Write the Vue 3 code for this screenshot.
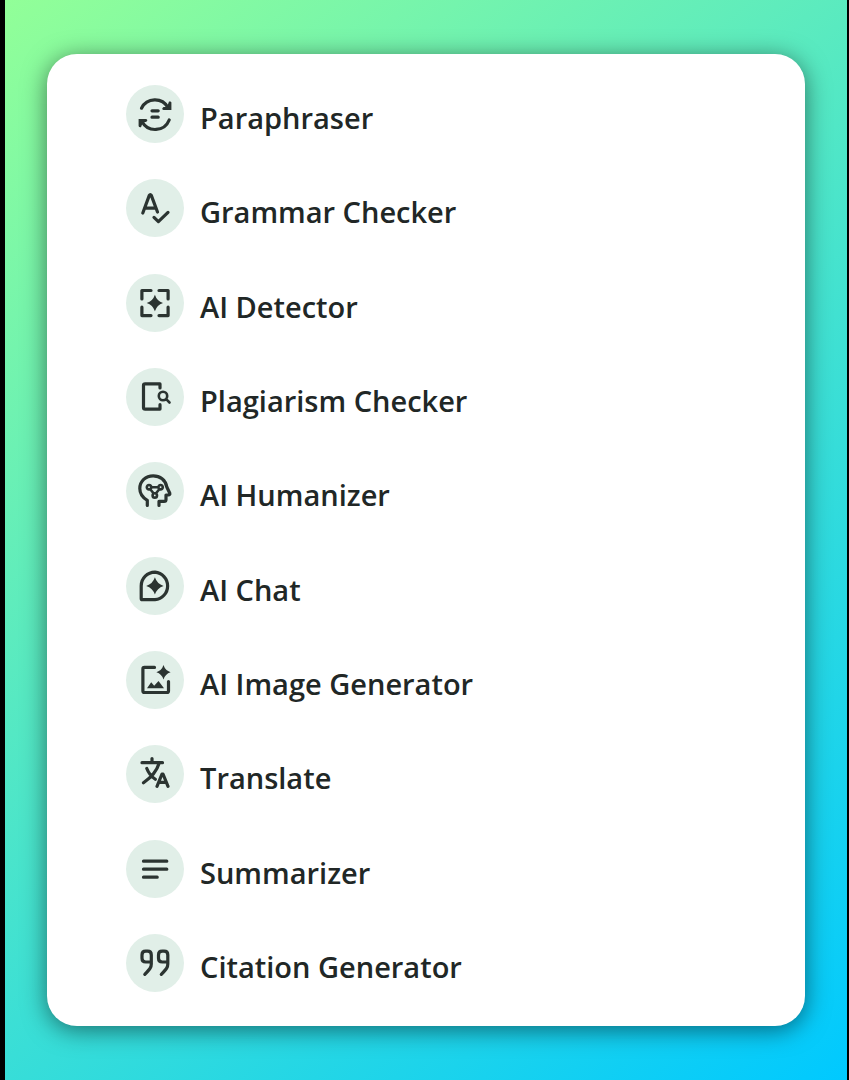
<template>
  <div class="page">
    <main class="card">
      <ul class="tool-list">
        <li v-for="tool in tools" :key="tool.name" class="tool">
          <span class="tool-icon">
            <svg viewBox="0 0 58 58" aria-hidden="true">
              <path v-if="tool.line" class="line" :d="tool.line" />
              <path v-if="tool.thin" class="thin" :d="tool.thin" />
              <path v-if="tool.fill" class="fill" :d="tool.fill" />
            </svg>
          </span>
          <span class="tool-name">{{ tool.name }}</span>
        </li>
      </ul>
    </main>
  </div>
</template>

<script setup>
// line / thin are stroked, fill is solid
const tools = [
  {
    name: 'Paraphraser',
    line: 'M15.5 23.2A15 15 0 0 1 42 22.5M43.2 35A15 15 0 0 1 16 36.5M26 25.8H32.2M26 32.2H32.2',
    fill: 'M43 16.5Q45.4 16 45.4 17.5V25H37.5Q36 25 36.3 23.2L37.5 22L41 22ZM15 42.3Q12.6 42.5 12.6 41V34H20Q21.5 34 21.3 35.7L20 37L17 37Z'
  },
  {
    name: 'Grammar Checker',
    line: 'M16.8 34L23.3 16.4Q24.3 14.8 25.3 16.4L31.5 33M19 29.2H29.5M28 38.4L32.4 42.6L42 33.4'
  },
  {
    name: 'AI Detector',
    line: 'M15.9 25V16.5H25M33 16.5H42.1V25M42.1 33.2V41.6H33M25 41.6H15.9V33.2',
    fill: 'M28.9 20.7Q30.9 27 37 29Q30.9 31 28.9 37.3Q26.9 31 20.7 29Q26.9 27 28.9 20.7Z'
  },
  {
    name: 'Plagiarism Checker',
    line: 'M34 20V15.9H19.2Q17.5 15.9 17.5 17.6V39.4Q17.5 41.1 19.2 41.1H34V36.7',
    thin: 'M41.2 28A4.2 4.2 0 1 1 32.8 28A4.2 4.2 0 1 1 41.2 28M40.2 31.2L43.5 34.5'
  },
  {
    name: 'AI Humanizer',
    line: 'M21.3 43.5V38.3C16.5 35.5 13.8 31.2 13.8 26.5C13.8 19.2 19.7 13.8 27.2 13.8C34 13.8 39.6 18 40.8 25L43.8 31.3Q44.2 32.8 42.3 33H40V37.4Q40 39.3 38 39.3H33V43.5',
    thin: 'M25.2 25.2A2.2 2.2 0 1 1 20.8 25.2A2.2 2.2 0 1 1 25.2 25.2M36.8 25.2A2.2 2.2 0 1 1 32.4 25.2A2.2 2.2 0 1 1 36.8 25.2M31 33.4A2.2 2.2 0 1 1 26.6 33.4A2.2 2.2 0 1 1 31 33.4M25.2 25.2H32.4M24.3 27.2L27.5 31.3M33.3 27.2L30 31.3'
  },
  {
    name: 'AI Chat',
    line: 'M29 15.2A13.8 13.8 0 0 1 29 42.7H16.5Q15.2 42.7 15.2 41.4V29A13.8 13.8 0 0 1 29 15.2Z',
    fill: 'M28.9 20.2Q31 26.8 37.6 28.9Q31 31 28.9 37.6Q26.8 31 20.2 28.9Q26.8 26.8 28.9 20.2Z'
  },
  {
    name: 'AI Image Generator',
    line: 'M28.5 16.4H18.4Q16.9 16.4 16.9 17.9V40Q16.9 41.5 18.4 41.5H41Q42.5 41.5 42.5 40V30.5',
    fill: 'M37.5 14Q39.2 19.5 44.6 21.2Q39.2 22.9 37.5 28.4Q35.8 22.9 30.4 21.2Q35.8 19.5 37.5 14ZM21 37.2L25.2 31.3L28.2 34.8L32.5 30L38 37.2Z'
  },
  {
    name: 'Translate',
    line: 'M16 17.7H36.5M26 13.5V17.5M33 18.5C30.8 26 25 32.5 17.5 37.8M20.8 23.5C22.5 28 25.5 31.7 29.3 34.3M31 41.3L36 29H37L42 41.3M33 37.4H40'
  },
  {
    name: 'Summarizer',
    line: 'M17.5 21.2H40.8M17.5 29.2H40.8M17.5 37.2H31.2'
  },
  {
    name: 'Citation Generator',
    line: 'M25.3 28H19.7Q16 28 16 24.3V20.9Q16 17.2 19.7 17.2H21.6Q25.3 17.2 25.3 20.9V30C25.3 33 24.5 34.5 18.8 40.3M41.8 28H36.2Q32.5 28 32.5 24.3V20.9Q32.5 17.2 36.2 17.2H38.1Q41.8 17.2 41.8 20.9V30C41.8 33 41 34.5 35.3 40.3'
  }
]
</script>

<style>
body {
  margin: 0;
  background: #000;
}
</style>

<style scoped>
.page {
  box-sizing: border-box;
  display: flex;
  min-height: 100vh;
  margin: 0 2px 0 5px;
  padding: 54px 42px;
  background: linear-gradient(142deg, #92ff98 0%, #00c9ff 100%);
  font-family: "Open Sans", "Noto Sans", sans-serif;
}

.card {
  box-sizing: border-box;
  display: flex;
  flex: 1;
  padding: 31px 79px 34px;
  border-radius: 30px;
  background: #fff;
  box-shadow: 0 4px 24px rgba(0, 0, 0, 0.5);
}

.tool-list {
  display: flex;
  flex: 1;
  flex-direction: column;
  justify-content: space-between;
  margin: 0;
  padding: 0;
  list-style: none;
}

.tool {
  display: flex;
  align-items: center;
  gap: 16px;
}

.tool-icon {
  flex: none;
  width: 58px;
  height: 58px;
  border-radius: 50%;
  background: #e1efe8;
}

.tool-icon svg {
  display: block;
  width: 100%;
  height: 100%;
}

.line,
.thin {
  fill: none;
  stroke: #2b3431;
  stroke-width: 3.2;
  stroke-linecap: round;
  stroke-linejoin: round;
}

.thin {
  stroke-width: 2.6;
}

.fill {
  fill: #2b3431;
}

.tool-name {
  padding-top: 8px;
  color: #212726;
  font-size: 29px;
  font-weight: 600;
  line-height: 40px;
}
</style>
